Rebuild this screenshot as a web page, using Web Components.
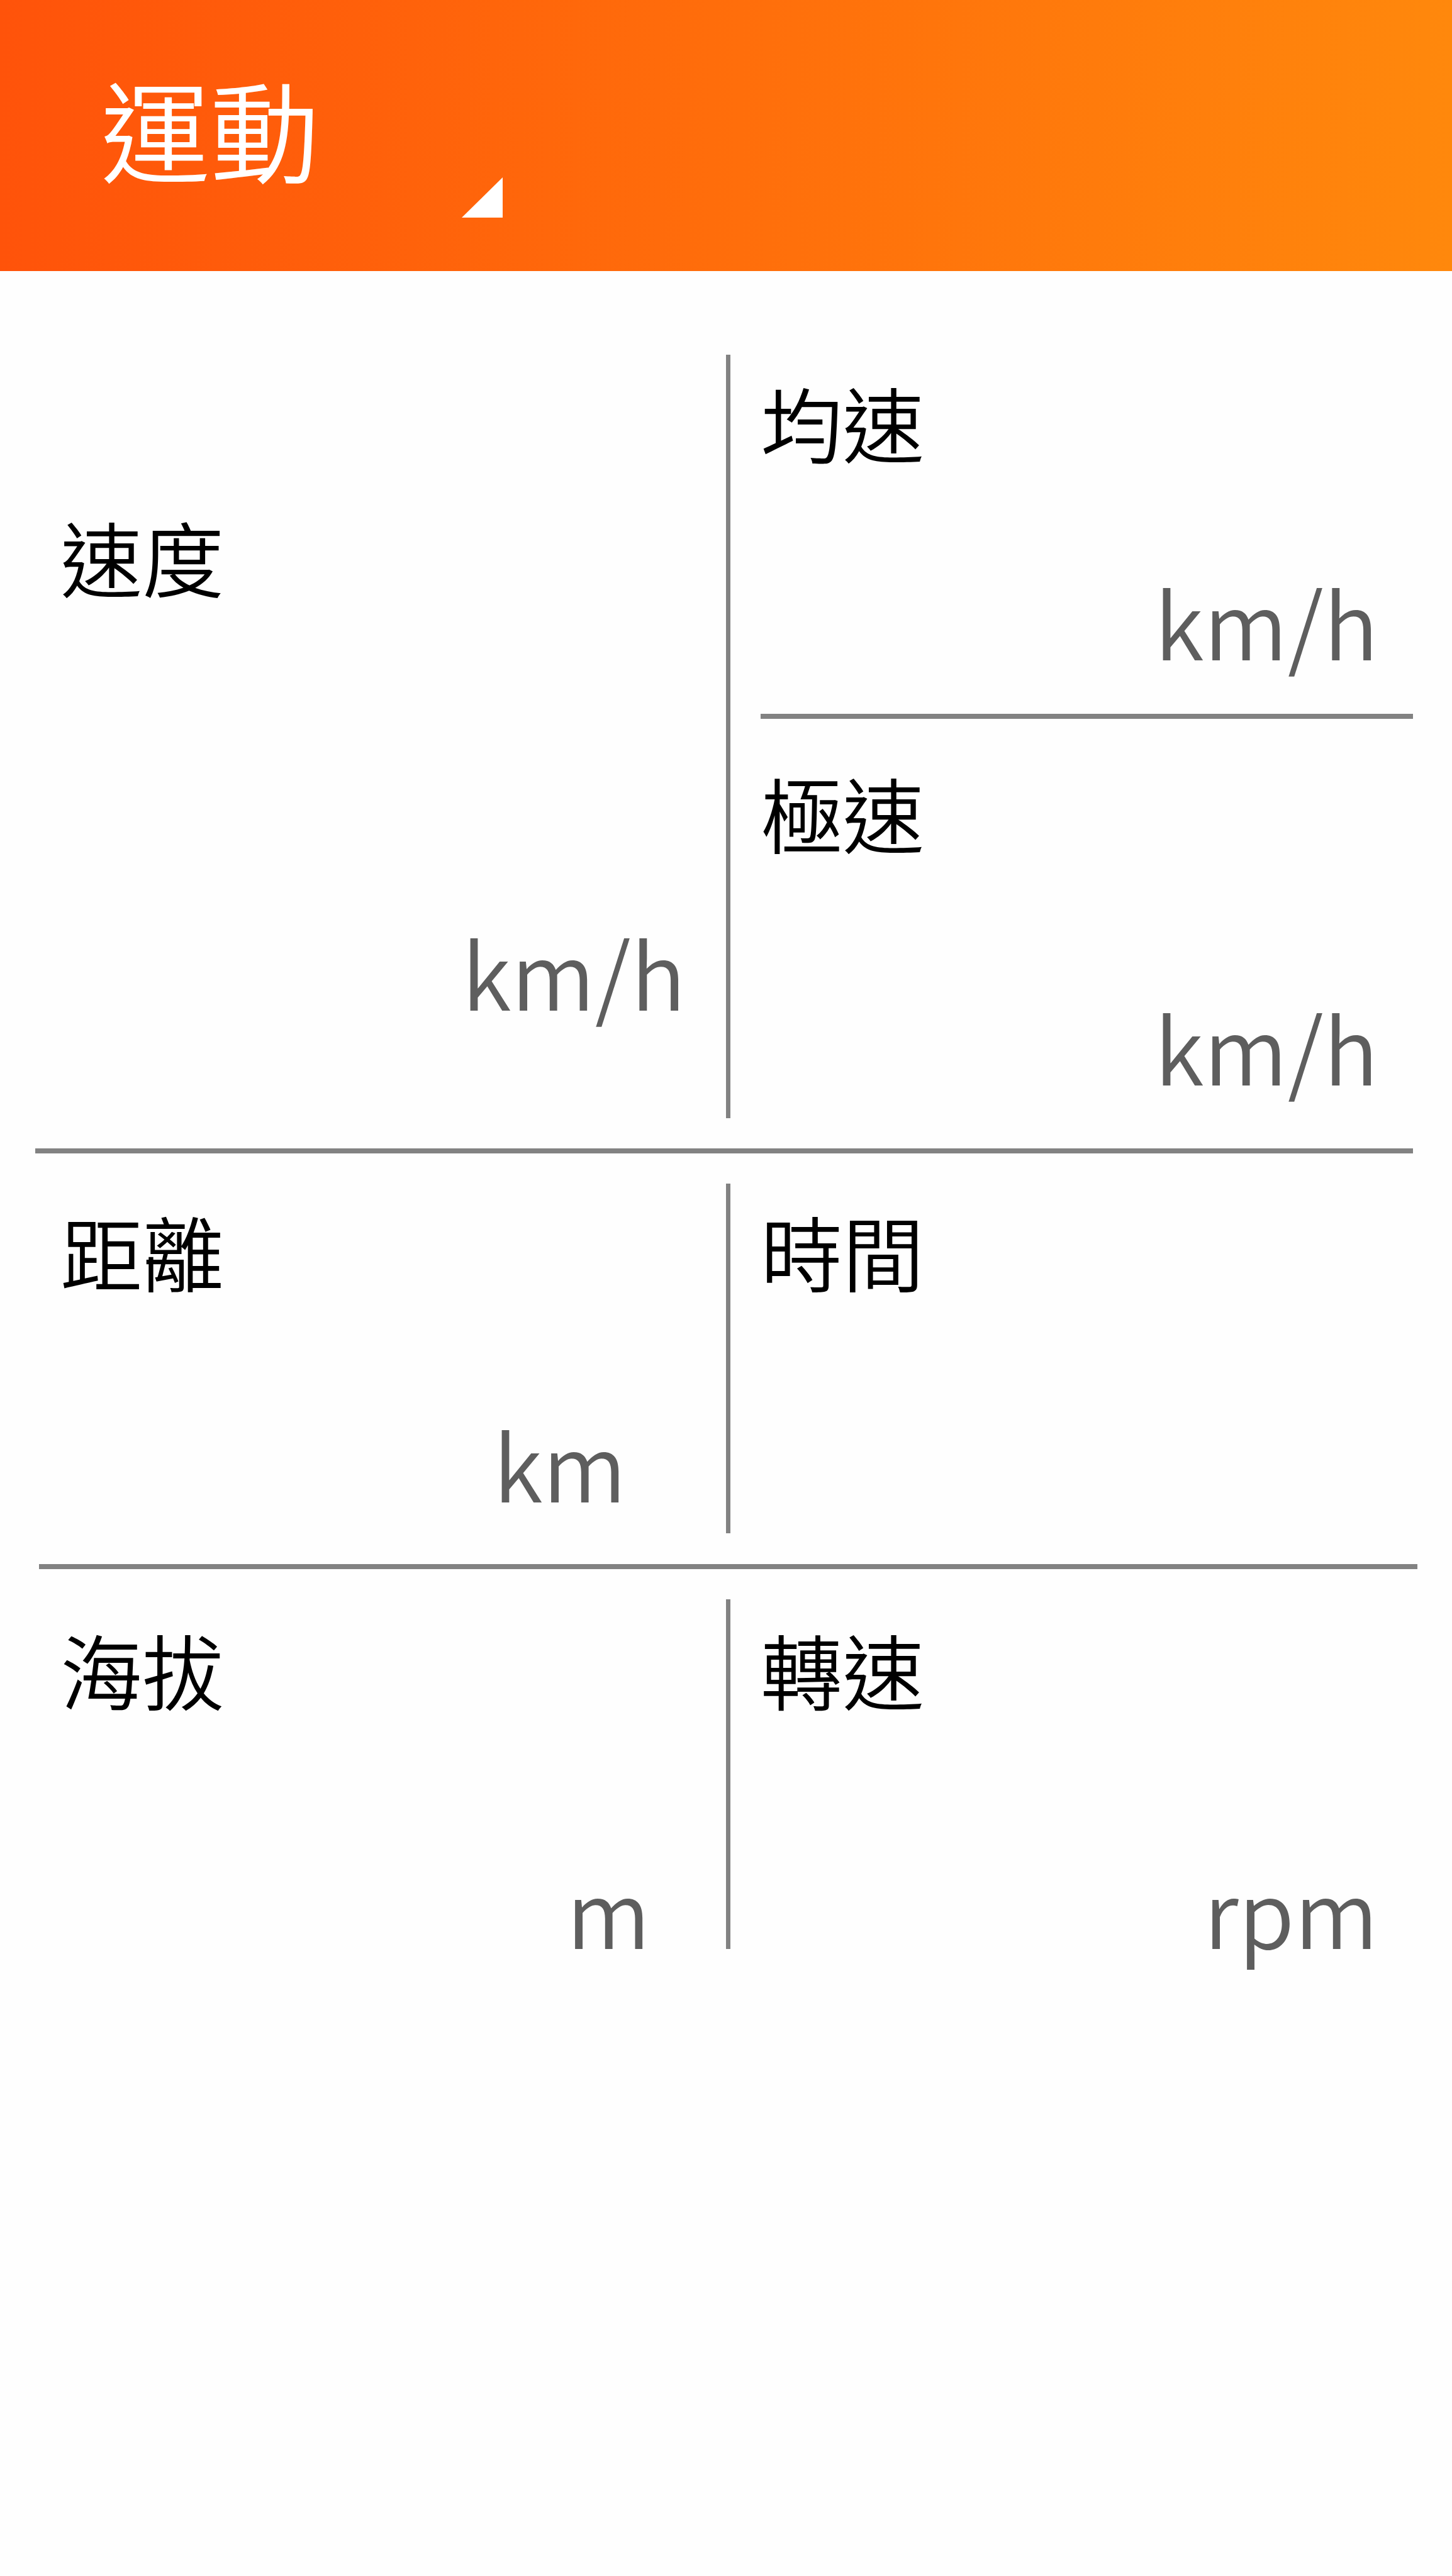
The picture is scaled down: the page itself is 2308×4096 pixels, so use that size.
<!DOCTYPE html>
<html lang="zh-Hant">
<head>
<meta charset="utf-8">
<meta name="viewport" content="width=device-width, initial-scale=1">
<title>運動</title>
<style>
  body {
    margin: 0;
    background: #fefefe;
    color: #000;
    font-family: "Noto Sans CJK TC", sans-serif;
    font-weight: 350;
  }
</style>
</head>
<body>
<ride-app></ride-app>
<script>
  const define = (name, html) => {
    const template = document.createElement('template');
    template.innerHTML = html;
    customElements.define(name, class extends HTMLElement {
      constructor() {
        super();
        this.attachShadow({ mode: 'open' }).append(template.content.cloneNode(true));
      }
    });
  };

  define('ride-header', `
    <style>
      :host {
        display: flex;
        align-items: center;
        height: 431px;
        padding: 0 160px;
        background: linear-gradient(90deg, #ff530a, #ff880c);
      }
      button {
        display: flex;
        gap: 226px;
        min-height: 261px;
        padding: 0;
        border: 0;
        background: none;
        color: #fff;
        font: inherit;
        font-size: 174px;
        line-height: 234px;
      }
      svg { display: block; align-self: flex-end; width: 65px; height: 64px; fill: currentColor; }
    </style>
    <button type="button" aria-haspopup="menu">
      <slot></slot>
      <svg viewBox="0 0 65 64" aria-hidden="true"><path d="M65 0V64H0Z"/></svg>
    </button>`);

  define('rule-line', `
    <style>
      :host { display: block; min-width: 7px; min-height: 8px; background: #828282; }
    </style>`);

  define('metric-tile', `
    <style>
      :host {
        display: flex;
        flex-direction: column;
        justify-content: space-between;
        box-sizing: border-box;
        padding: 40px 62px 40px 48px;
      }
      .label { font-size: 130px; line-height: 130px; }
      .unit { align-self: flex-end; font-size: 145px; line-height: 144px; color: #5e5e5e; }
    </style>
    <div class="label"><slot></slot></div>
    <div class="unit"><slot name="unit"></slot></div>`);

  define('ride-app', `
    <style>
      :host { display: block; min-height: 100vh; }
      main { padding: 133px 55px 0 62px; }
      section { display: grid; grid-template-columns: 1fr 7px 1fr; }
      .stack { display: flex; flex-direction: column; }
      .across { margin: 48px 7px 48px -6px; }
      .across.last { margin: 49px 0 48px; }
      .inset { margin: 0 7px 0 48px; }
      .speed { min-height: 1214px; padding: 254px 64px 162px 34px; }
      .average { min-height: 571px; padding-bottom: 76px; }
      .top { min-height: 635px; padding-top: 82px; padding-bottom: 43px; }
      .row { min-height: 556px; }
      .left { padding-left: 34px; }
      .distance { padding-right: 158px; }
      .end { min-height: 565px; padding-top: 44px; padding-bottom: 0; }
      .altitude { padding-right: 120px; }
      .short { margin-bottom: 9px; }
    </style>
    <ride-header>運動</ride-header>
    <main>
      <section>
        <metric-tile class="speed">速度<span slot="unit">km/h</span></metric-tile>
        <rule-line></rule-line>
        <div class="stack">
          <metric-tile class="average">均速<span slot="unit">km/h</span></metric-tile>
          <rule-line class="inset"></rule-line>
          <metric-tile class="top">極速<span slot="unit">km/h</span></metric-tile>
        </div>
      </section>
      <rule-line class="across"></rule-line>
      <section>
        <metric-tile class="row left distance">距離<span slot="unit">km</span></metric-tile>
        <rule-line></rule-line>
        <metric-tile class="row">時間</metric-tile>
      </section>
      <rule-line class="across last"></rule-line>
      <section>
        <metric-tile class="end left altitude">海拔<span slot="unit">m</span></metric-tile>
        <rule-line class="short"></rule-line>
        <metric-tile class="end">轉速<span slot="unit">rpm</span></metric-tile>
      </section>
    </main>`);
</script>
</body>
</html>
